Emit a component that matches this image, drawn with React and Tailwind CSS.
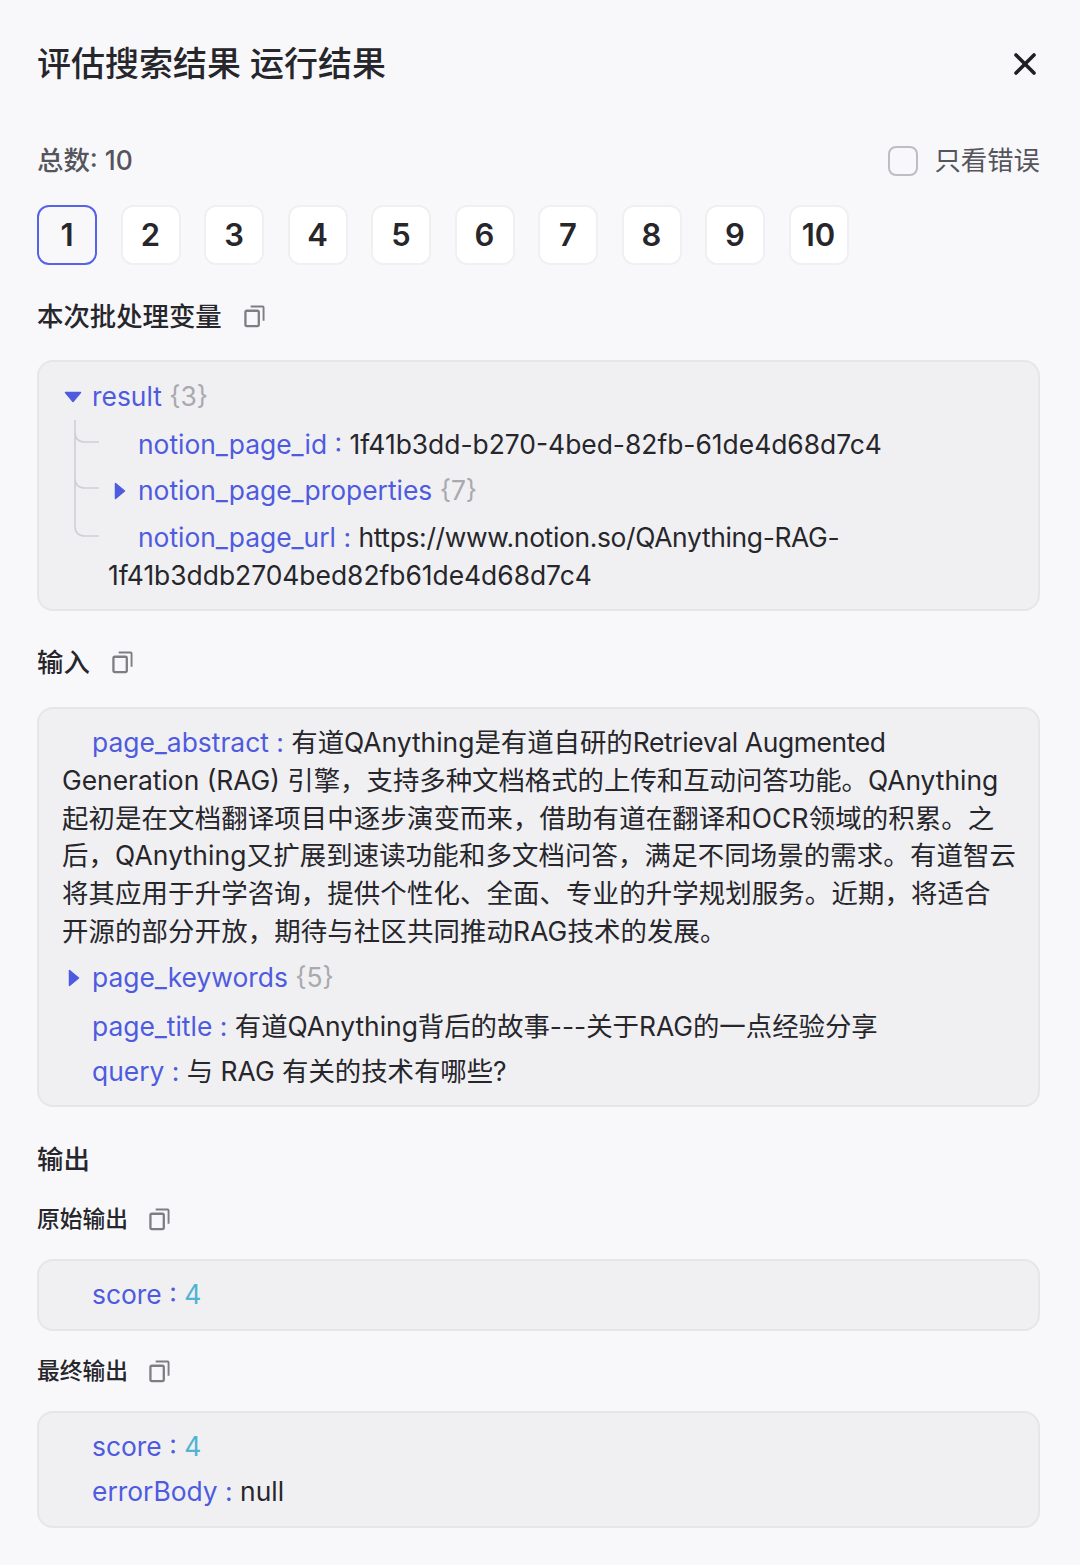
import React from 'react';
import { X } from 'lucide-react';

const font = 'font-["Inter","Noto_Sans_CJK_SC",sans-serif]';

const CopyIcon = () => (
  <svg width="21" height="24" viewBox="0 0 22 24" fill="none" className="shrink-0">
    <rect x="1.5" y="6.5" width="14" height="16" rx="1.5" stroke="#7d7d82" strokeWidth="2.4" />
    <path d="M7 2h12.5a1 1 0 0 1 1 1v14" stroke="#7d7d82" strokeWidth="2" />
  </svg>
);

const ArrowDown = () => (
  <svg width="18" height="12" viewBox="0 0 18 12" className="absolute left-[2px] top-[13px]">
    <path d="M1.5 1.5h15L9 10.5z" fill="#4e5bdf" stroke="#4e5bdf" strokeWidth="1.5" strokeLinejoin="round" />
  </svg>
);

const ArrowRight = ({ className }) => (
  <svg width="12" height="18" viewBox="0 0 12 18" className={className}>
    <path d="M1.5 1.5v15l9-7.5z" fill="#4e5bdf" stroke="#4e5bdf" strokeWidth="1.5" strokeLinejoin="round" />
  </svg>
);

const Key = ({ children }) => <span className="text-[#4e5bdf]">{children}</span>;
const Count = ({ children }) => <span className="text-[#a9a9ae]">{children}</span>;

const Heading = ({ children, small, className }) => (
  <div className={`flex items-center font-medium leading-[36px] text-[#26262b] ${small ? 'gap-[21px] text-[22.75px]' : 'gap-[22px] text-[26.4px]'} ${className}`}>
    {children}
  </div>
);

const Box = ({ children, className }) => (
  <div className={`relative rounded-[16px] border-2 border-[#e6e6e9] bg-[#f0f0f3] pl-[23px] pr-[21px] text-[26.4px] leading-[37.8px] text-[#26262b] ${className}`}>
    {children}
  </div>
);

export default function App() {
  return (
    <div className={`${font} w-[1080px] h-[1565px] overflow-hidden bg-[#f8f8fb] pl-[37px] pr-[40px] pt-[40px]`}>
      <div className="flex h-[48px] items-center justify-between">
        <h1 className="text-[34px] font-medium leading-[48px] text-[#26262b]">评估搜索结果 运行结果</h1>
        <X size={36} strokeWidth={2.4} className="mr-[-3px] text-[#1f1f24]" />
      </div>

      <div className="mt-[51px] flex h-[44px] items-center justify-between">
        <span className="text-[26.4px] font-medium text-[#55555c]">总数: 10</span>
        <label className="flex items-center gap-[16px] text-[26.4px] text-[#55555c]">
          <span className="h-[30px] w-[30px] rounded-[8px] border-2 border-[#bdbdc4] bg-[#f8f8fb]" />
          只看错误
        </label>
      </div>

      <div className="mt-[22px] flex gap-[23.5px]">
        {[1, 2, 3, 4, 5, 6, 7, 8, 9, 10].map(n => (
          <button key={n}
            className={`flex h-[60px] w-[60px] items-center justify-center rounded-[12px] text-[31px] font-semibold text-[#26262b] ${n === 1 ? 'border-2 border-[#5763e6]' : 'border-2 border-[#f0f0f3] bg-white'}`}>
            {n}
          </button>
        ))}
      </div>

      <Heading className="mt-[33px]">本次批处理变量 <CopyIcon /></Heading>

      <Box className="mt-[26px] h-[251px] pt-[16px]">
        <svg width="30" height="125" viewBox="0 0 30 125" fill="none" className="absolute left-[34px] top-[58px]">
          <path d="M2 0v106q0 10 10 10h14M2 12q0 10 10 10h14M2 58q0 10 10 10h14" stroke="#cfcfd5" strokeWidth="1.6" />
        </svg>
        <div className="relative pl-[30px]">
          <ArrowDown />
          <Key>result</Key> <Count>{'{3}'}</Count>
        </div>
        <div className="relative mt-[10px] pl-[76px]">
          <Key>notion_page_id :</Key> 1f41b3dd-b270-4bed-82fb-61de4d68d7c4
        </div>
        <div className="relative mt-[8px] pl-[76px]">
          <ArrowRight className="absolute left-[52px] top-[10px]" />
          <Key>notion_page_properties</Key> <Count>{'{7}'}</Count>
        </div>
        <div className="mt-[9.5px] pl-[46px] indent-[30px]">
          <Key>notion_page_url :</Key> <span className="tracking-[-0.33px]">https://www.notion.so/QAnything-RAG-</span>1f41b3ddb2704bed82fb61de4d68d7c4
        </div>
      </Box>

      <Heading className="mt-[33px]">输入 <CopyIcon /></Heading>

      <Box className="mt-[27px] h-[400px] pt-[15px]">
        <div className="indent-[30px]">
          <Key>page_abstract :</Key> 有道QAnything是有道自研的<span className="tracking-[-0.35px]">Retrieval Augmented</span> Generation (RAG) 引擎，支持多种文档格式的上传和互动问答功能。QAnything<span className="tracking-[0.14px]">起初是在文档翻译项目中逐步演变而来，借助有道在翻译和OCR领域的积累。之后，QAnything又扩展到速读功能和多文档问答，满足不同场景的需求。有道智云将其应用于升学咨询，提供个性化、全面、专业的升学规划服务。近期，将适合<br />开源的部分开放，期待与社区共同推动RAG技术的发展。</span>
        </div>
        <div className="relative mt-[8px] pl-[30px]">
          <ArrowRight className="absolute left-[6px] top-[10px]" />
          <Key>page_keywords</Key> <Count>{'{5}'}</Count>
        </div>
        <div className="mt-[11px] pl-[30px]">
          <Key>page_title :</Key> 有道QAnything背后的故事---关于RAG的一点经验分享
        </div>
        <div className="mt-[8px] pl-[30px]">
          <Key>query :</Key> 与 RAG 有关的技术有哪些?
        </div>
      </Box>

      <Heading className="mt-[34px]">输出</Heading>

      <Heading small className="mt-[24px]">原始输出 <CopyIcon /></Heading>

      <Box className="mt-[22px] h-[72px] pt-[15px]">
        <div className="pl-[30px]">
          <Key>score :</Key> <span className="text-[#4fb3d1]">4</span>
        </div>
      </Box>

      <Heading small className="mt-[22px]">最终输出 <CopyIcon /></Heading>

      <Box className="mt-[22px] h-[117px] pt-[15px]">
        <div className="pl-[30px]">
          <Key>score :</Key> <span className="text-[#4fb3d1]">4</span>
        </div>
        <div className="mt-[7px] pl-[30px]">
          <Key>errorBody :</Key> null
        </div>
      </Box>
    </div>
  );
}
